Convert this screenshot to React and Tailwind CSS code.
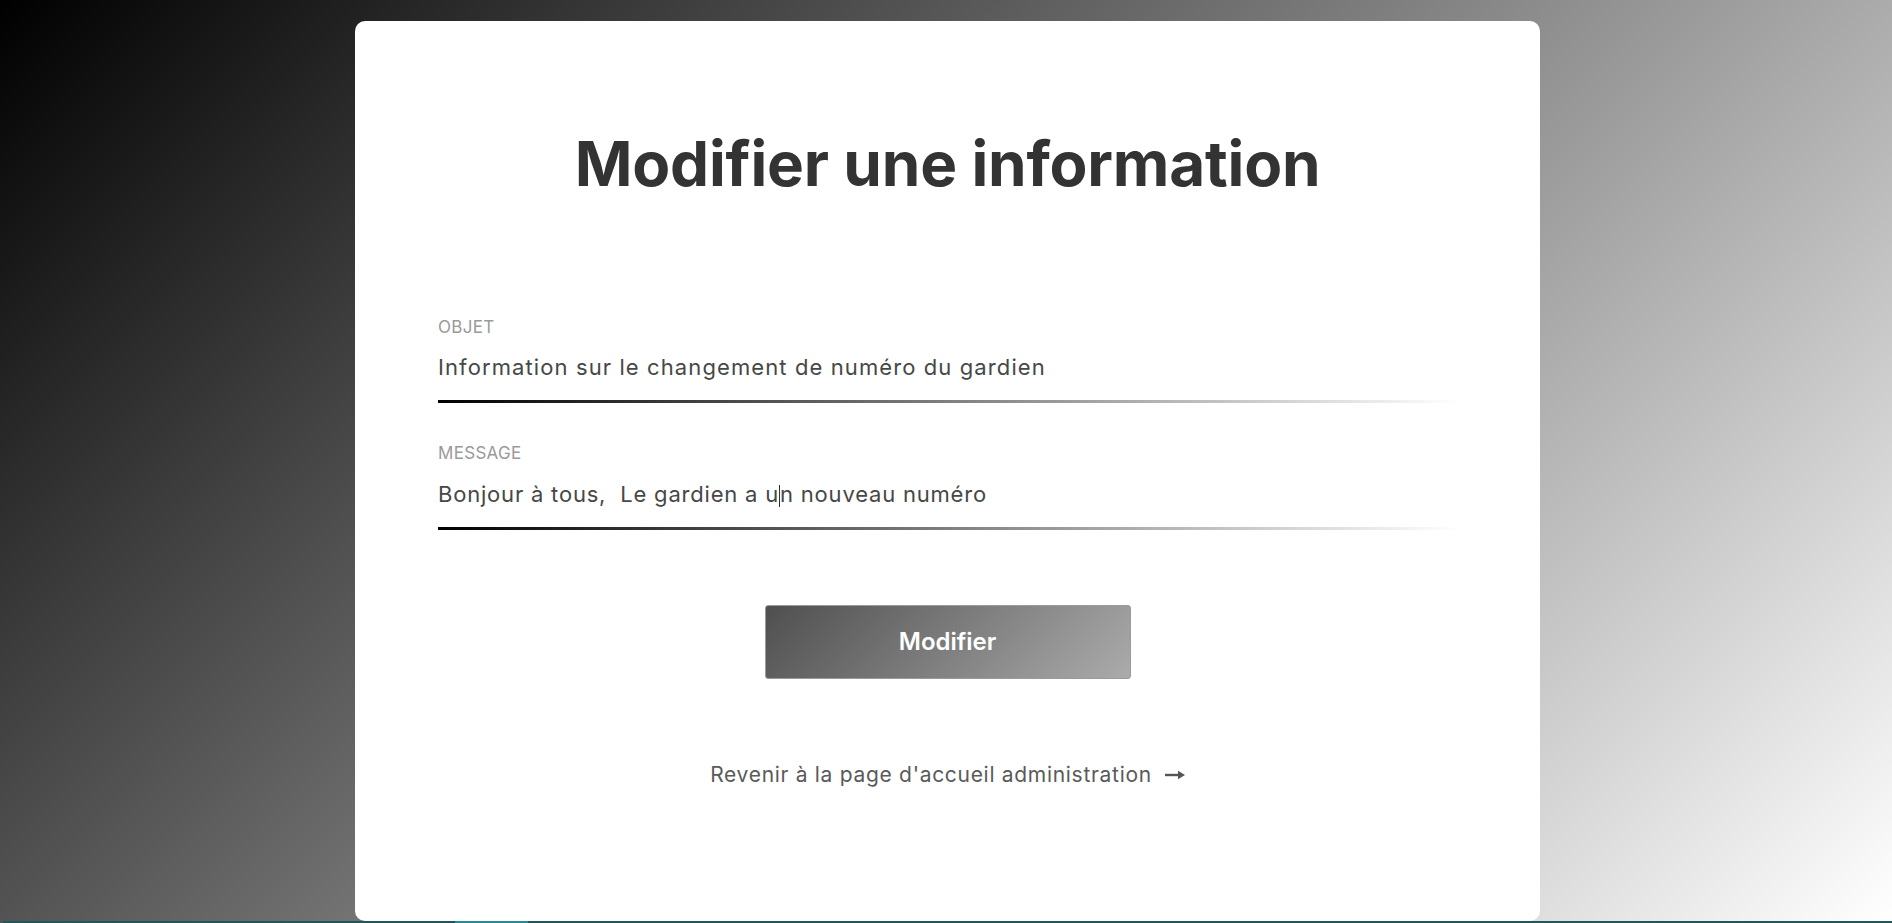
import React from "react";

function Arrow() {
  return (
    <svg width="20" height="10" viewBox="0 0 20 10" className="ml-[13px]">
      <rect x="0" y="3.8" width="14" height="2.4" fill="#555" />
      <polygon points="13,0.8 20,5 13,9.2" fill="#555" />
    </svg>
  );
}

export default function App() {
  return (
    <div
      className="w-full h-[923px] pl-[3px] flex flex-col items-center bg-[linear-gradient(135deg,#000_0%,#fff_100%)] overflow-hidden"
      style={{ fontFamily: "Inter, 'Noto Sans', sans-serif" }}
    >
      <div className="mt-[21px] w-[1185px] h-[900px] shrink-0 rounded-[10px] bg-white flex flex-col">
        <h1 className="mt-[112px] text-center text-[62px] leading-[62px] font-bold text-[#333] tracking-[-0.2px]">
          Modifier une information
        </h1>

        <div className="ml-[83px] w-[1022px] flex flex-col">
          <label className="mt-[122px] text-[17px] leading-[20px] text-[#9a9a9a] uppercase tracking-[0.3px]">
            Objet
          </label>
          <div className="mt-[16px] text-[22px] leading-[28px] text-[#474747] tracking-[1.1px]">
            Information sur le changement de numéro du gardien
          </div>
          <div className="mt-[19px] h-[3px] w-full bg-[linear-gradient(to_right,#000_0%,#fff_100%)]" />

          <label className="mt-[40px] text-[17px] leading-[20px] text-[#9a9a9a] uppercase tracking-[0.3px]">
            Message
          </label>
          <div className="mt-[17px] text-[22px] leading-[28px] text-[#474747] tracking-[0.8px]">
            Bonjour à tous,&nbsp; Le gardien a u
            <span className="inline-block w-0 h-[22px] border-l border-[#333] align-[-5px]" />
            n nouveau numéro
          </div>
          <div className="mt-[19px] h-[3px] w-full bg-[linear-gradient(to_right,#000_0%,#fff_100%)]" />
        </div>

        <div className="mt-[75px] flex justify-center">
          <button className="w-[366px] h-[74px] rounded-[3px] border border-[#9a9a9a] bg-[linear-gradient(135deg,#4f4f4f_0%,#ababab_100%)] text-white text-[24px] font-semibold flex items-center justify-center">
            Modifier
          </button>
        </div>

        <div className="mt-[82px] flex justify-center items-center">
          <span className="text-[21px] leading-[28px] text-[#5a5a5a] tracking-[0.7px]">
            Revenir à la page d'accueil administration
          </span>
          <Arrow />
        </div>
      </div>
      <div className="w-full h-[2px] shrink-0 bg-[#24555a] flex">
        <div className="ml-[452px] w-[73px] h-full bg-[#2a8c8f]" />
      </div>
    </div>
  );
}
